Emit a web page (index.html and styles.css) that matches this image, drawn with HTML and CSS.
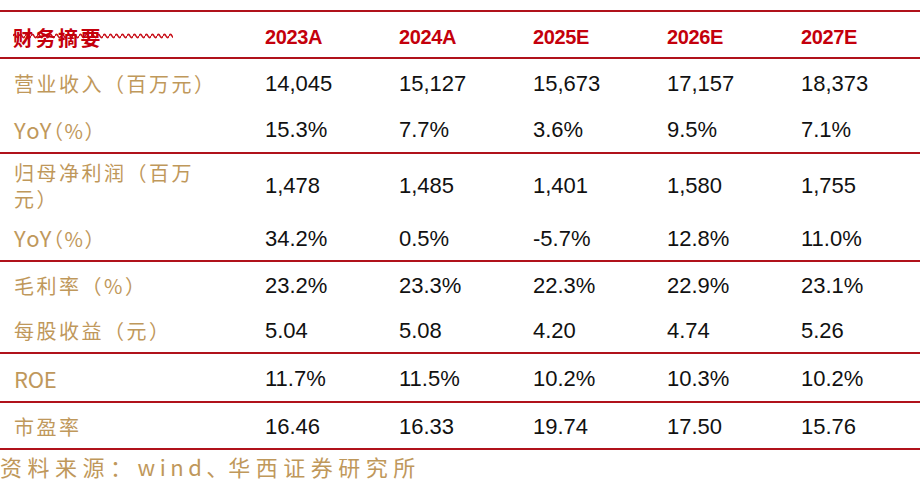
FILE: index.html
```html
<!DOCTYPE html>
<html lang="zh-CN">
<head>
<meta charset="utf-8">
<title>财务摘要</title>
<link rel="stylesheet" href="styles.css">
</head>
<body>
<div class="sheet">
  <div class="table">
    <div class="group">
      <div class="row h45">
        <div class="label title">
          <span class="title-wrap">
            <svg class="wave" width="160" height="6" viewBox="0 0 160 6" aria-hidden="true">
              <defs>
                <pattern id="wv" patternUnits="userSpaceOnUse" width="6" height="6">
                  <path d="M0 3 Q1.5 -0.2 3 3 T6 3" fill="none" stroke="#c8101a" stroke-width="1.6"/>
                </pattern>
              </defs>
              <rect x="0" y="0" width="160" height="6" fill="url(#wv)"/>
            </svg>
            <span class="title-text">财务摘要</span>
          </span>
        </div>
        <div class="yr">2023A</div>
        <div class="yr">2024A</div>
        <div class="yr">2025E</div>
        <div class="yr">2026E</div>
        <div class="yr">2027E</div>
      </div>
    </div>

    <div class="group">
      <div class="row h46">
        <div class="label">营业收入（百万元）</div>
        <div class="num">14,045</div>
        <div class="num">15,127</div>
        <div class="num">15,673</div>
        <div class="num">17,157</div>
        <div class="num">18,373</div>
      </div>
      <div class="row h47">
        <div class="label"><span class="lat yoy">YoY</span><span class="tight">（%）</span></div>
        <div class="num">15.3%</div>
        <div class="num">7.7%</div>
        <div class="num">3.6%</div>
        <div class="num">9.5%</div>
        <div class="num">7.1%</div>
      </div>
    </div>

    <div class="group">
      <div class="row h60">
        <div class="label">归母净利润（百万元）</div>
        <div class="num">1,478</div>
        <div class="num">1,485</div>
        <div class="num">1,401</div>
        <div class="num">1,580</div>
        <div class="num">1,755</div>
      </div>
      <div class="row h46">
        <div class="label"><span class="lat yoy">YoY</span><span class="tight">（%）</span></div>
        <div class="num">34.2%</div>
        <div class="num">0.5%</div>
        <div class="num">-5.7%</div>
        <div class="num">12.8%</div>
        <div class="num">11.0%</div>
      </div>
    </div>

    <div class="group">
      <div class="row h45">
        <div class="label">毛利率（%）</div>
        <div class="num">23.2%</div>
        <div class="num">23.3%</div>
        <div class="num">22.3%</div>
        <div class="num">22.9%</div>
        <div class="num">23.1%</div>
      </div>
      <div class="row h45">
        <div class="label">每股收益（元）</div>
        <div class="num">5.04</div>
        <div class="num">5.08</div>
        <div class="num">4.20</div>
        <div class="num">4.74</div>
        <div class="num">5.26</div>
      </div>
    </div>

    <div class="group">
      <div class="row h47">
        <div class="label"><span class="lat">ROE</span></div>
        <div class="num">11.7%</div>
        <div class="num">11.5%</div>
        <div class="num">10.2%</div>
        <div class="num">10.3%</div>
        <div class="num">10.2%</div>
      </div>
    </div>

    <div class="group">
      <div class="row h45">
        <div class="label">市盈率</div>
        <div class="num">16.46</div>
        <div class="num">16.33</div>
        <div class="num">19.74</div>
        <div class="num">17.50</div>
        <div class="num">15.76</div>
      </div>
    </div>
  </div>
  <div class="source">资料来源：<span class="src-lat">wind</span><span class="comma">、</span>华西证券研究所</div>
</div>
</body>
</html>
```

FILE: styles.css
```css
* {
  box-sizing: border-box;
  margin: 0;
  padding: 0;
}

body {
  margin: 0;
  background: #ffffff;
  font-family: "Liberation Sans", Arial, sans-serif;
}

.sheet {
  width: 920px;
  padding-top: 10px;
}

.table {
  border-top: 2px solid #b0121b;
}

.group {
  border-bottom: 2px solid #b0121b;
}

.row {
  display: grid;
  grid-template-columns: 265px 134px 134px 134px 134px 1fr;
  align-items: center;
}

.h45 { height: 45px; }
.h46 { height: 46px; }
.h47 { height: 47px; }
.h60 { height: 60px; }

.label {
  padding: 3px 39px 0 14px;
  font-family: "Noto Sans CJK SC", "Noto Sans", sans-serif;
  font-size: 20px;
  line-height: 25.5px;
  letter-spacing: 2.5px;
  color: #bf985b;
}

.lat {
  font-size: 22px;
  letter-spacing: -0.3px;
  font-weight: normal;
}

.lat.yoy {
  letter-spacing: 1.5px;
}

.tight {
  font-feature-settings: "halt";
  letter-spacing: 1.5px;
}

.num {
  padding-top: 3px;
  font-size: 22px;
  line-height: 26px;
  color: #111111;
}

.yr {
  padding-top: 6px;
  font-size: 20px;
  font-weight: bold;
  letter-spacing: -0.4px;
  color: #c4000c;
}

.title {
  padding-top: 6px;
  padding-left: 13px;
  color: #c4000c;
  font-weight: bold;
}

.title-wrap {
  position: relative;
  display: inline-block;
}

.title-text {
  position: relative;
}

.wave {
  position: absolute;
  left: 0;
  top: 8px;
  display: block;
}

.source {
  font-family: "Noto Sans CJK SC", "Noto Sans", sans-serif;
  font-size: 22px;
  line-height: 32px;
  letter-spacing: 5.5px;
  color: #bf985b;
}

.src-lat {
  letter-spacing: 4.5px;
}

.comma {
  letter-spacing: 0;
}
```
